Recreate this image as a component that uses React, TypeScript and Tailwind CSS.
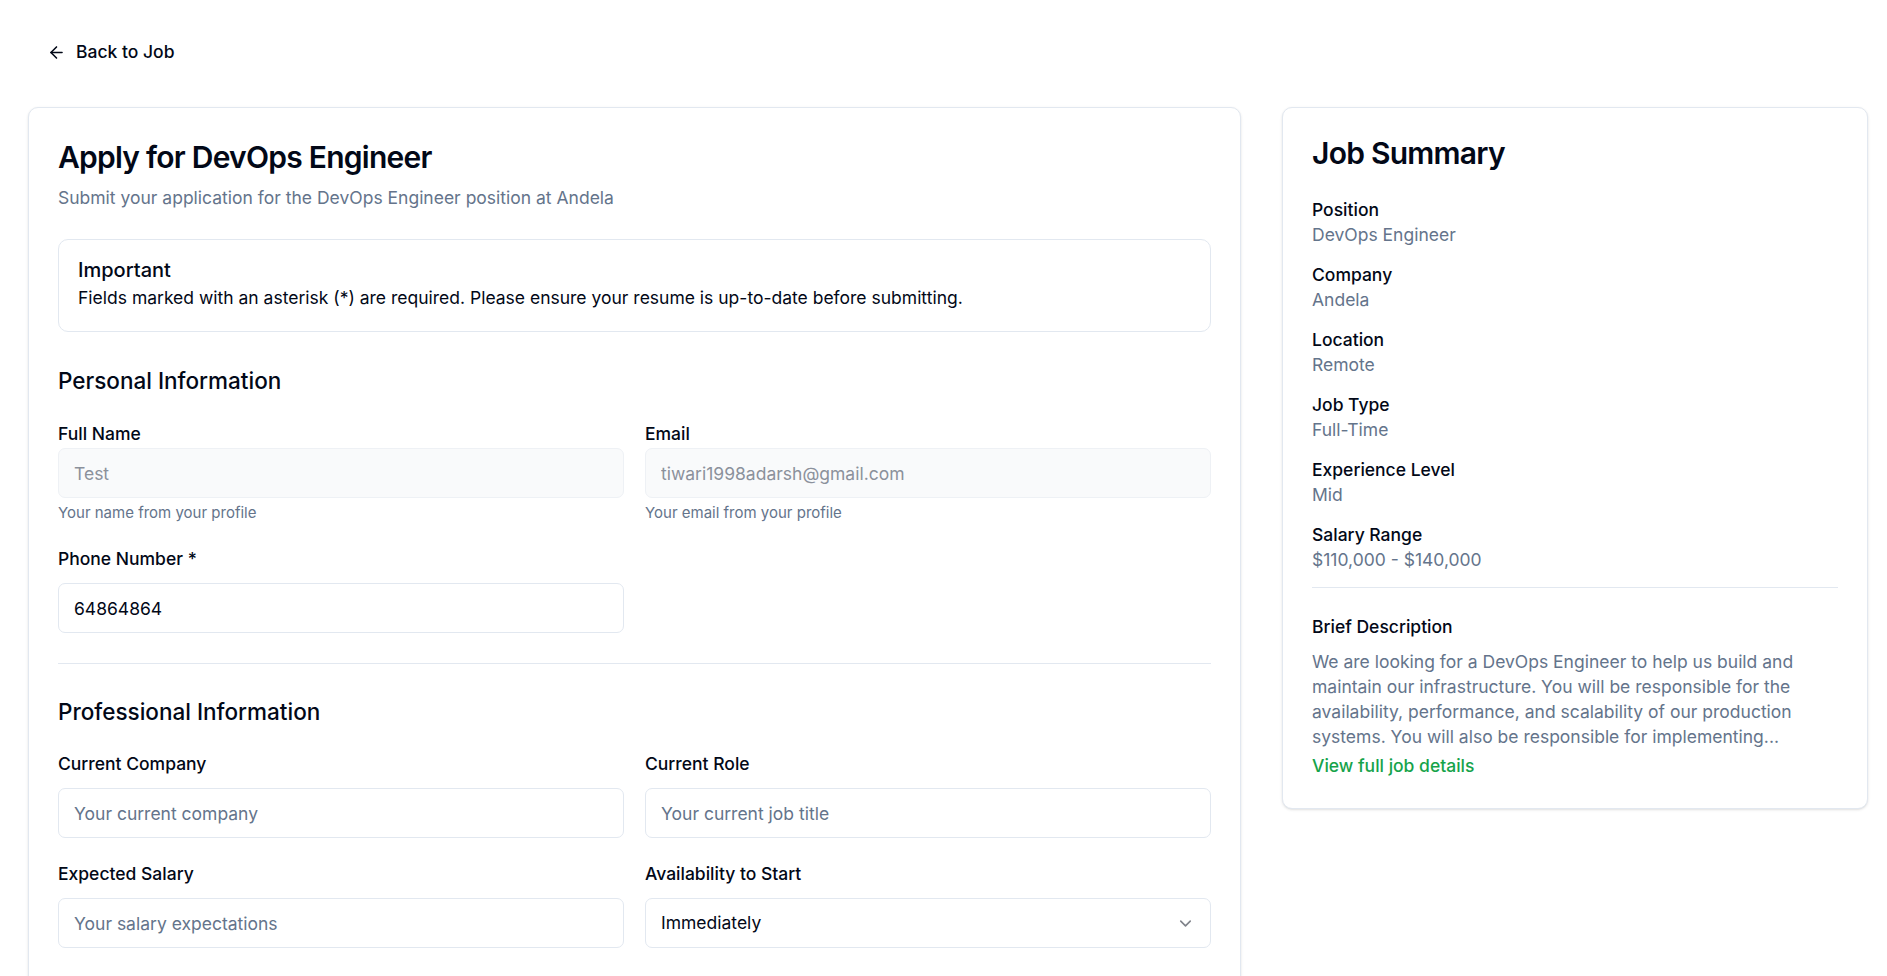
import React from "react"
import { ArrowLeft, ChevronDown } from "lucide-react"

const inputBase =
  "w-full h-[50px] rounded-[7px] border px-[15px] text-[17.5px] outline-none"

const Label = ({ children }: { children: React.ReactNode }) => (
  <label className="block text-[17.5px] font-medium leading-[17px] text-[#020817]">
    {children}
  </label>
)

const SummaryItem = ({ label, value }: { label: string; value: string }) => (
  <div>
    <p className="text-[17.5px] font-medium leading-[24px] text-[#020817]">{label}</p>
    <p className="text-[17.5px] leading-[26px] text-[#64748b]">{value}</p>
  </div>
)

export default function App() {
  return (
    <div
      className="min-h-screen bg-white pl-[28px] pr-[19px] pt-[28px] pb-10"
      style={{ fontFamily: "Inter, 'Noto Sans', sans-serif" }}
    >
      {/* back link */}
      <button className="flex h-[48px] items-center gap-[10px] px-[19px] text-[17.5px] font-medium text-[#020817]">
        <ArrowLeft size={19} strokeWidth={2} />
        Back to Job
      </button>

      <div className="mt-[31px] flex items-start gap-[41px]">
        {/* application form */}
        <div className="flex-1 rounded-[10px] border border-[#e2e8f0] bg-white px-[29px] pt-[29px] pb-[40px] shadow-sm">
          <h1 className="text-[30px] font-semibold leading-[41px] tracking-tight text-[#020817]">
            Apply for DevOps Engineer
          </h1>
          <p className="mt-[7px] text-[17.5px] leading-[25px] text-[#64748b]">
            Submit your application for the DevOps Engineer position at Andela
          </p>

          <div className="mt-[29px] rounded-[10px] border border-[#e2e8f0] px-[19px] pt-[19px] pb-[21px]">
            <p className="text-[20px] font-medium leading-[23px] text-[#020817]">Important</p>
            <p className="mt-[3px] text-[17.5px] leading-[25px] text-[#020817]">
              Fields marked with an asterisk (*) are required. Please ensure your resume is up-to-date before submitting.
            </p>
          </div>

          {/* personal */}
          <h2 className="mt-[34px] text-[22.5px] font-medium leading-[29px] text-[#020817]">
            Personal Information
          </h2>
          <div className="mt-[30px] grid grid-cols-2 gap-x-[21px]">
            <div>
              <Label>Full Name</Label>
              <input
                disabled
                value="Test"
                readOnly
                className={`${inputBase} mt-[6px] border-[#eef1f5] bg-[#f9fafb] text-[#8b919b]`}
              />
              <p className="mt-[5px] text-[15px] leading-[20px] text-[#64748b]">Your name from your profile</p>
            </div>
            <div>
              <Label>Email</Label>
              <input
                disabled
                value="tiwari1998adarsh@gmail.com"
                readOnly
                className={`${inputBase} mt-[6px] border-[#eef1f5] bg-[#f9fafb] text-[#8b919b]`}
              />
              <p className="mt-[5px] text-[15px] leading-[20px] text-[#64748b]">Your email from your profile</p>
            </div>
          </div>
          <div className="mt-[27px] grid grid-cols-2 gap-x-[21px]">
            <div>
              <Label>Phone Number *</Label>
              <input
                defaultValue="64864864"
                className={`${inputBase} mt-[16px] border-[#e2e8f0] bg-white text-[#020817]`}
              />
            </div>
          </div>

          <div className="mt-[30px] h-px bg-[#e2e8f0]" />

          {/* professional */}
          <h2 className="mt-[33px] text-[22.5px] font-medium leading-[29px] text-[#020817]">
            Professional Information
          </h2>
          <div className="mt-[29px] grid grid-cols-2 gap-x-[21px] gap-y-[27px]">
            <div>
              <Label>Current Company</Label>
              <input
                placeholder="Your current company"
                className={`${inputBase} mt-[16px] border-[#e2e8f0] bg-white text-[#020817] placeholder:text-[#64748b]`}
              />
            </div>
            <div>
              <Label>Current Role</Label>
              <input
                placeholder="Your current job title"
                className={`${inputBase} mt-[16px] border-[#e2e8f0] bg-white text-[#020817] placeholder:text-[#64748b]`}
              />
            </div>
            <div>
              <Label>Expected Salary</Label>
              <input
                placeholder="Your salary expectations"
                className={`${inputBase} mt-[16px] border-[#e2e8f0] bg-white text-[#020817] placeholder:text-[#64748b]`}
              />
            </div>
            <div>
              <Label>Availability to Start</Label>
              <button
                className={`${inputBase} mt-[16px] flex items-center justify-between border-[#e2e8f0] bg-white text-left text-[#020817]`}
              >
                <span>Immediately</span>
                <ChevronDown size={19} className="opacity-50" />
              </button>
            </div>
          </div>

          <h2 className="mt-[40px] text-[22.5px] font-medium leading-[29px] text-[#020817]">
            Resume & Cover Letter
          </h2>
          <div className="mt-[28px]">
            <Label>Resume *</Label>
            <div className="mt-[15px] h-[140px] rounded-[7px] border border-dashed border-[#e2e8f0]" />
          </div>
        </div>

        {/* job summary */}
        <div className="w-[586px] rounded-[10px] border border-[#e2e8f0] bg-white px-[29px] pt-[29px] pb-[30px] shadow-sm">
          <h2 className="text-[30px] font-semibold leading-[32px] tracking-tight text-[#020817]">
            Job Summary
          </h2>
          <div className="mt-[29px] flex flex-col gap-[15px]">
            <SummaryItem label="Position" value="DevOps Engineer" />
            <SummaryItem label="Company" value="Andela" />
            <SummaryItem label="Location" value="Remote" />
            <SummaryItem label="Job Type" value="Full-Time" />
            <SummaryItem label="Experience Level" value="Mid" />
            <SummaryItem label="Salary Range" value="$110,000 - $140,000" />
          </div>
          <div className="mt-[14px] h-px bg-[#e2e8f0]" />
          <p className="mt-[27px] text-[17.5px] font-medium leading-[24px] text-[#020817]">Brief Description</p>
          <p className="mt-[10px] text-[17.5px] leading-[25px] text-[#64748b]">
            We are looking for a DevOps Engineer to help us build and maintain our infrastructure. You will be
            responsible for the availability, performance, and scalability of our production systems. You will also be
            responsible for implementing...
          </p>
          <a className="mt-[5px] block text-[17.5px] font-medium leading-[24px] text-[#16a34a]" href="#">
            View full job details
          </a>
        </div>
      </div>
    </div>
  )
}
